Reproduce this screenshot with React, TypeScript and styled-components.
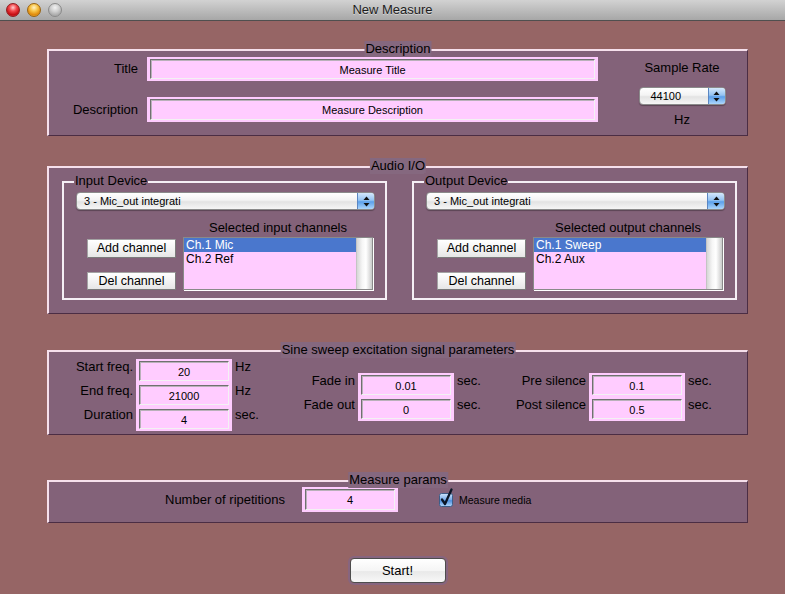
import React from 'react';
import styled, { createGlobalStyle } from 'styled-components';

const GlobalStyle = createGlobalStyle`
  html, body { margin: 0; padding: 0; background: #966565; }
  body { font-family: "Liberation Sans", Arial, sans-serif; font-size: 13px; color: #000; }
  * { box-sizing: border-box; }
`;

const Window = styled.div`
  width: 785px;
  height: 594px;
  overflow: hidden;
  background: #966565;
  display: flex;
  flex-direction: column;
`;

const TitleBar = styled.header`
  height: 21px;
  flex: none;
  display: grid;
  grid-template-columns: 1fr auto 1fr;
  align-items: center;
  background: linear-gradient(#d2d2d2, #a7a7a7);
  border-bottom: 1px solid #4f4f4f;
`;

const Lights = styled.div`
  display: flex;
  gap: 7px;
  padding-left: 6px;
  margin-top: -1px;
`;

const lightBg: Record<string, string> = {
  red: 'radial-gradient(circle at 50% 30%, #ffd0d0 0, #f2484c 35%, #c40d12 70%, #e9565a 100%)',
  orange: 'radial-gradient(circle at 50% 30%, #fff2c8 0, #f8c64a 35%, #e08a0b 70%, #f6c35a 100%)',
  gray: 'radial-gradient(circle at 50% 30%, #f2f2f2 0, #cfcfcf 40%, #a9a9a9 75%, #c9c9c9 100%)',
};
const lightBorder: Record<string, string> = { red: '#8e1d20', orange: '#9a6410', gray: '#8a8a8a' };

const Light = styled.span<{ $c: 'red' | 'orange' | 'gray' }>`
  width: 14px;
  height: 14px;
  border-radius: 50%;
  background: ${p => lightBg[p.$c]};
  border: 1px solid ${p => lightBorder[p.$c]};
`;

const WindowTitle = styled.span`
  font-size: 13px;
  color: #1c1c1c;
  text-shadow: 0 1px 0 rgba(255, 255, 255, 0.45);
  line-height: 20px;
`;

const Main = styled.main`
  display: flex;
  flex-direction: column;
  width: 701px;
  margin: 28px 0 0 47px;
`;

const Panel = styled.section<{ $h: number; $mt?: number }>`
  position: relative;
  height: ${p => p.$h}px;
  margin-top: ${p => p.$mt ?? 0}px;
  background: #836279;
  border-top: 2px solid #f6e0ec;
  border-left: 2px solid #f6e0ec;
  border-bottom: 1px solid #4b2d44;
  border-right: 1px solid #4b2d44;
`;

const Legend = styled.span`
  position: absolute;
  top: -10px;
  left: 50%;
  transform: translateX(-50%);
  background: #85687f;
  padding: 0 1px;
  line-height: 16px;
  font-size: 13px;
  white-space: nowrap;
`;

const SubLegend = styled.span`
  position: absolute;
  top: -10px;
  left: 10px;
  background: #836279;
  padding: 0 1px;
  line-height: 16px;
  font-size: 13px;
  white-space: nowrap;
`;

/* Description panel */
const DescBody = styled.div`
  display: flex;
  padding-top: 6px;
`;

const DescGrid = styled.div`
  display: grid;
  grid-template-columns: 89px 451px;
  grid-template-rows: 24px 25px;
  column-gap: 9px;
  row-gap: 16px;
  align-items: center;
`;

const RightLabel = styled.span`
  text-align: right;
  line-height: 16px;
  white-space: nowrap;
`;

const SampleCol = styled.div`
  margin-left: 32px;
  width: 104px;
  padding-top: 3px;
  display: flex;
  flex-direction: column;
  align-items: center;
`;

const Caption = styled.span<{ $mt?: number }>`
  line-height: 16px;
  margin-top: ${p => p.$mt ?? 0}px;
  white-space: nowrap;
`;

/* Text field */
const Field = styled.div<{ $w: number; $h?: number }>`
  width: ${p => p.$w}px;
  height: ${p => p.$h ?? 24}px;
  background: #ffccff;
  padding: 2px 3px;
  display: flex;
`;

const FieldInner = styled.div`
  flex: 1;
  background: #ffccff;
  border-top: 1px solid #707070;
  border-left: 1px solid #707070;
  border-bottom: 1px solid #f2f2f2;
  border-right: 1px solid #f2f2f2;
  box-shadow: inset 1px 1px 0 #b9b0b9;
  display: flex;
  align-items: center;
  justify-content: center;
  font-size: 11px;
  line-height: 12px;
  padding-top: 1px;
`;

/* Popup menu */
const Popup = styled.div<{ $w?: number }>`
  height: 18px;
  width: ${p => (p.$w ? `${p.$w}px` : 'auto')};
  display: flex;
  border: 1px solid #8b8b8b;
  border-radius: 4px;
  overflow: hidden;
  background: linear-gradient(#ffffff, #f3f3f3 45%, #e3e3e3 55%, #f6f6f6);
  box-shadow: 0 1px 1px rgba(0, 0, 0, 0.3);
`;

const PopupText = styled.span<{ $pl: number }>`
  flex: 1;
  font-size: 11px;
  line-height: 16px;
  padding-left: ${p => p.$pl}px;
  white-space: nowrap;
  overflow: hidden;
`;

const PopupArrows = styled.span`
  width: 17px;
  flex: none;
  border-left: 1px solid #5b86c2;
  background: linear-gradient(#d4e8fc, #94c3f2 45%, #5b9fea 55%, #acd6fc);
  display: flex;
  align-items: center;
  justify-content: center;
`;

const Arrows = () => (
  <svg width="7" height="11" viewBox="0 0 7 11">
    <path d="M3.5 0.5 L6.5 4 L0.5 4 Z" fill="#111" />
    <path d="M3.5 10.5 L6.5 7 L0.5 7 Z" fill="#111" />
  </svg>
);

/* Audio I/O */
const AudioBody = styled.div`
  display: flex;
  gap: 25px;
  padding: 13px 0 0 13px;
`;

const SubPanel = styled.div`
  position: relative;
  width: 325px;
  height: 119px;
  border: 2px solid #f5eff5;
  padding: 9px 10px 0 12px;
`;

const ChannelArea = styled.div`
  display: grid;
  grid-template-columns: 89px 190px;
  grid-template-rows: 16px 53px;
  column-gap: 7px;
  row-gap: 1px;
  margin: 10px 0 0 11px;
`;

const ListCaption = styled.span`
  grid-column: 2;
  text-align: center;
  line-height: 16px;
  white-space: nowrap;
`;

const ButtonCol = styled.div`
  grid-column: 1;
  display: flex;
  flex-direction: column;
  gap: 14px;
  padding-top: 2px;
`;

const ChanButton = styled.button`
  height: 19px;
  width: 89px;
  padding: 0;
  font-family: inherit;
  font-size: 12.5px;
  color: #000;
  background: linear-gradient(#ffffff, #f1f1f1 60%, #e6e6e6);
  border: 1px solid #a3a3a3;
  border-bottom-color: #7c7c7c;
  border-right-color: #7c7c7c;
`;

const ListBox = styled.div`
  grid-column: 2;
  display: flex;
  background: #ffccff;
  border: 1px solid #8a8a8a;
  box-shadow: 1px 1px 0 #ffffff;
`;

const ListItems = styled.div`
  flex: 1;
  display: flex;
  flex-direction: column;
`;

const ListItem = styled.div<{ $sel?: boolean }>`
  height: 14px;
  line-height: 14px;
  font-size: 12px;
  padding-left: 2px;
  background: ${p => (p.$sel ? '#4a77cd' : 'transparent')};
  color: ${p => (p.$sel ? '#ffffff' : '#000')};
  white-space: nowrap;
  overflow: hidden;
`;

const ScrollTrack = styled.div`
  width: 16px;
  flex: none;
  border-left: 1px solid #c4c4c4;
  background: linear-gradient(to right, #d6d6d6, #f6f6f6 35%, #ffffff 60%, #c9c9c9);
`;

/* Sine sweep */
const SweepBody = styled.div`
  display: flex;
  align-items: flex-start;
`;

const ParamGroup = styled.div<{ $lw: number; $mt: number }>`
  display: grid;
  grid-template-columns: ${p => p.$lw}px 96px 30px;
  grid-auto-rows: 24px;
  column-gap: 3px;
  margin-top: ${p => p.$mt}px;
`;

const ParamLabel = styled.span`
  text-align: right;
  line-height: 16px;
  white-space: nowrap;
`;

const Unit = styled.span`
  line-height: 16px;
  white-space: nowrap;
`;

/* Measure params */
const MeasureBody = styled.div`
  display: flex;
  align-items: center;
  height: 25px;
  margin-top: 5px;
  padding-left: 116px;
`;

const FieldSlot = styled.div`
  margin-left: 17px;
`;

const CheckWrap = styled.label`
  display: flex;
  align-items: center;
  margin-left: 41px;
  gap: 5px;
  font-size: 10.5px;
`;

const CheckSvg = styled.svg`
  margin-top: -4px;
`;

const CheckMark = () => (
  <CheckSvg width="15" height="19" viewBox="0 0 15 19">
    <defs>
      <linearGradient id="cbfill" x1="0" y1="0" x2="0" y2="1">
        <stop offset="0" stopColor="#cfe4fb" />
        <stop offset="0.5" stopColor="#74aaea" />
        <stop offset="0.55" stopColor="#4d8fe0" />
        <stop offset="1" stopColor="#b4d9fb" />
      </linearGradient>
    </defs>
    <rect x="0.5" y="5.5" width="13" height="13" rx="2" fill="url(#cbfill)" stroke="#3d5d88" />
    <path d="M3 11.5 L6 16 L12.5 1.5" fill="none" stroke="#0b1627" strokeWidth="2.3" strokeLinecap="round" strokeLinejoin="round" />
  </CheckSvg>
);

const StartButton = styled.button`
  align-self: center;
  margin-top: 35px;
  width: 96px;
  height: 25px;
  padding: 0;
  font-family: inherit;
  font-size: 13px;
  color: #000;
  border: 1px solid #4d4d4d;
  border-radius: 4px;
  background: linear-gradient(#ffffff, #f5f5f5 50%, #e9e9e9 55%, #f7f7f7);
  box-shadow: 0 0 0 2px #87657f;
`;

const SampleBox = styled.div`
  margin-top: 11px;
`;

const Input = ({ w, h, value }: { w: number; h?: number; value: string }) => (
  <Field $w={w} $h={h}>
    <FieldInner>{value}</FieldInner>
  </Field>
);

const DeviceBox = ({ legend, caption, items }: { legend: string; caption: string; items: string[] }) => (
  <SubPanel>
    <SubLegend>{legend}</SubLegend>
    <Popup>
      <PopupText $pl={7}>3 - Mic_out integrati</PopupText>
      <PopupArrows><Arrows /></PopupArrows>
    </Popup>
    <ChannelArea>
      <ListCaption>{caption}</ListCaption>
      <ButtonCol>
        <ChanButton>Add channel</ChanButton>
        <ChanButton>Del channel</ChanButton>
      </ButtonCol>
      <ListBox>
        <ListItems>
          {items.map((it, i) => (
            <ListItem key={it} $sel={i === 0}>{it}</ListItem>
          ))}
        </ListItems>
        <ScrollTrack />
      </ListBox>
    </ChannelArea>
  </SubPanel>
);

type Row = { label: string; value: string; unit: string };

const Group = ({ lw, mt, rows }: { lw: number; mt: number; rows: Row[] }) => (
  <ParamGroup $lw={lw} $mt={mt}>
    {rows.map(r => (
      <React.Fragment key={r.label}>
        <ParamLabel>{r.label}</ParamLabel>
        <Input w={96} value={r.value} />
        <Unit>{r.unit}</Unit>
      </React.Fragment>
    ))}
  </ParamGroup>
);

export default function App() {
  return (
    <>
      <GlobalStyle />
      <Window>
        <TitleBar>
          <Lights>
            <Light $c="red" />
            <Light $c="orange" />
            <Light $c="gray" />
          </Lights>
          <WindowTitle>New Measure</WindowTitle>
          <span />
        </TitleBar>
        <Main>
          <Panel $h={87}>
            <Legend>Description</Legend>
            <DescBody>
              <DescGrid>
                <RightLabel>Title</RightLabel>
                <Input w={451} value="Measure Title" />
                <RightLabel>Description</RightLabel>
                <Input w={451} h={25} value="Measure Description" />
              </DescGrid>
              <SampleCol>
                <Caption>Sample Rate</Caption>
                <SampleBox>
                  <Popup $w={87}>
                    <PopupText $pl={11}>44100</PopupText>
                    <PopupArrows><Arrows /></PopupArrows>
                  </Popup>
                </SampleBox>
                <Caption $mt={7}>Hz</Caption>
              </SampleCol>
            </DescBody>
          </Panel>

          <Panel $h={148} $mt={30}>
            <Legend>Audio I/O</Legend>
            <AudioBody>
              <DeviceBox legend="Input Device" caption="Selected input channels" items={['Ch.1 Mic', 'Ch.2 Ref']} />
              <DeviceBox legend="Output Device" caption="Selected output channels" items={['Ch.1 Sweep', 'Ch.2 Aux']} />
            </AudioBody>
          </Panel>

          <Panel $h={85} $mt={36}>
            <Legend>Sine sweep excitation signal parameters</Legend>
            <SweepBody>
              <Group
                lw={84}
                mt={7}
                rows={[
                  { label: 'Start freq.', value: '20', unit: 'Hz' },
                  { label: 'End freq.', value: '21000', unit: 'Hz' },
                  { label: 'Duration', value: '4', unit: 'sec.' },
                ]}
              />
              <Group
                lw={90}
                mt={21}
                rows={[
                  { label: 'Fade in', value: '0.01', unit: 'sec.' },
                  { label: 'Fade out', value: '0', unit: 'sec.' },
                ]}
              />
              <Group
                lw={99}
                mt={21}
                rows={[
                  { label: 'Pre silence', value: '0.1', unit: 'sec.' },
                  { label: 'Post silence', value: '0.5', unit: 'sec.' },
                ]}
              />
            </SweepBody>
          </Panel>

          <Panel $h={43} $mt={45}>
            <Legend>Measure params</Legend>
            <MeasureBody>
              <RightLabel>Number of ripetitions</RightLabel>
              <FieldSlot>
                <Input w={96} h={25} value="4" />
              </FieldSlot>
              <CheckWrap>
                <CheckMark />
                Measure media
              </CheckWrap>
            </MeasureBody>
          </Panel>

          <StartButton>Start!</StartButton>
        </Main>
      </Window>
    </>
  );
}
